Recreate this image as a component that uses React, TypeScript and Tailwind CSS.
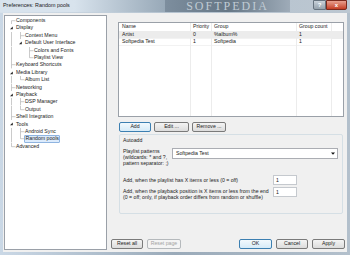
import React from 'react';

const font = { fontFamily: '"Liberation Sans", Arial, sans-serif' };

type Node = { label: string; level: number; exp?: boolean; selected?: boolean };

const tree: Node[] = [
  { label: 'Components', level: 0 },
  { label: 'Display', level: 0, exp: true },
  { label: 'Context Menu', level: 1 },
  { label: 'Default User Interface', level: 1, exp: true },
  { label: 'Colors and Fonts', level: 2 },
  { label: 'Playlist View', level: 2 },
  { label: 'Keyboard Shortcuts', level: 0 },
  { label: 'Media Library', level: 0, exp: true },
  { label: 'Album List', level: 1 },
  { label: 'Networking', level: 0 },
  { label: 'Playback', level: 0, exp: true },
  { label: 'DSP Manager', level: 1 },
  { label: 'Output', level: 1 },
  { label: 'Shell Integration', level: 0 },
  { label: 'Tools', level: 0, exp: true },
  { label: 'Android Sync', level: 1 },
  { label: 'Random pools', level: 1, selected: true },
  { label: 'Advanced', level: 0 },
];

// does the branch at depth d continue below row i?
function continues(i: number, d: number) {
  for (let j = i + 1; j < tree.length; j++) {
    if (tree[j].level < d) return false;
    if (tree[j].level === d) return true;
  }
  return false;
}

const LINE = '#a7a7a7';

function Cell({ kind, i }: { kind: 'pass' | 'empty' | 'node'; i?: number }) {
  const node = i !== undefined ? tree[i] : undefined;
  return (
    <svg width="9" height="7.4" viewBox="0 0 9 7.4" className="shrink-0">
      {kind === 'pass' && <line x1="4.5" y1="0" x2="4.5" y2="7.4" stroke={LINE} strokeWidth="0.6" />}
      {kind === 'node' && node && !node.exp && (
        <>
          {i! > 0 && <line x1="4.5" y1="0" x2="4.5" y2="3.7" stroke={LINE} strokeWidth="0.6" />}
          {continues(i!, node.level) && <line x1="4.5" y1="3.7" x2="4.5" y2="7.4" stroke={LINE} strokeWidth="0.6" />}
          <line x1="4.5" y1="3.7" x2="8.5" y2="3.7" stroke={LINE} strokeWidth="0.6" />
        </>
      )}
      {kind === 'node' && node && node.exp && <polygon points="5.8,2.4 5.8,5.2 3,5.2" fill="#262626" />}
    </svg>
  );
}

function Tree() {
  return (
    <div className="w-[103px] shrink-0 bg-white border border-[#9aa0a8] pt-[1px] pl-[2px] text-[5.2px] text-[#1b1b1b]">
      {tree.map((n, i) => (
        <div key={n.label} className="flex items-center h-[7.4px]">
          {Array.from({ length: n.level }).map((_, d) => (
            <Cell key={d} kind={continues(i, d) ? 'pass' : 'empty'} />
          ))}
          <Cell kind="node" i={i} />
          <span
            className={
              n.selected
                ? 'leading-none bg-[#dcebfc] border border-[#8fb4e0] rounded-[1px] px-[0.5px] py-[0.5px] -ml-[1px]'
                : 'leading-none'
            }
          >
            {n.label}
          </span>
        </div>
      ))}
    </div>
  );
}

function Btn({
  children,
  w,
  focus,
  disabled,
}: {
  children: React.ReactNode;
  w: string;
  focus?: boolean;
  disabled?: boolean;
}) {
  const base = 'flex items-center justify-center h-[10px] rounded-[2px] border text-[5.2px] leading-none';
  let look = 'border-[#7a7a7a] bg-linear-to-b from-[#f4f4f4] to-[#dcdcdc] text-[#1b1b1b]';
  if (focus) look = 'border-[#3c7fb1] bg-linear-to-b from-[#f2f9fd] to-[#d6ebf8] text-[#1b1b1b]';
  if (disabled) look = 'border-[#b5b9bc] bg-[#f4f4f4] text-[#a3a3a3]';
  return <div className={`${base} ${look} ${w}`}>{children}</div>;
}

const cols = [
  { title: 'Name', w: 'w-[72px]', pl: 'pl-[3px]', vals: ['Artist', 'Softpedia Test'] },
  { title: 'Priority', w: 'w-[21px]', pl: 'pl-[2px]', vals: ['0', '1'] },
  { title: 'Group', w: 'w-[85px]', pl: 'pl-[2px]', vals: ['%album%', 'Softpedia'] },
  { title: 'Group count', w: 'w-[35px]', pl: 'pl-[2px]', vals: ['1', '1'] },
];

function List() {
  return (
    <div className="ml-[7px] mt-[7px] w-[226px] h-[95px] bg-white border border-[#9aa0a8] flex text-[5.2px] text-[#1b1b1b]">
      {cols.map((c) => (
        <div key={c.title} className={`${c.w} shrink-0 border-r border-[#ececec] flex flex-col`}>
          <div className={`h-[9px] flex items-center ${c.pl} border-b border-[#ececec] leading-none`}>{c.title}</div>
          {c.vals.map((v, r) => (
            <div
              key={r}
              className={`h-[7px] flex items-center ${c.pl} leading-none border-b border-[#f2f2f2] ${r === 0 ? 'bg-[#ececec]' : ''}`}
            >
              {v}
            </div>
          ))}
        </div>
      ))}
      <div className="flex-1 flex flex-col">
        <div className="h-[9px] border-b border-[#ececec]" />
        <div className="h-[7px] bg-[#ececec]" />
      </div>
    </div>
  );
}

function Field({ w, value }: { w: string; value: string }) {
  return (
    <div className={`${w} h-[10px] bg-white border border-[#c5c9ce] flex items-center pl-[2px] text-[5.2px] leading-none`}>
      {value}
    </div>
  );
}

export default function App() {
  return (
    <div
      className="w-[350px] h-[255px] flex flex-col overflow-hidden bg-linear-to-r from-[#cad8e6] via-[#9aaab9] to-[#b3c0cc]"
      style={font}
    >
      {/* title bar */}
      <div className="h-[13px] shrink-0 flex items-start bg-linear-to-r from-[#d6e1eb] via-[#b4c2cf] to-[#bcc7d1]">
        <div className="flex items-center h-[12px] pl-[3px] w-[165px] text-[5.4px] text-[#1a1a1a] leading-none bg-linear-to-r from-[#d8e3ed] from-45% to-[#98a9b8]">
          Preferences: Random pools
        </div>
        <div className="w-[125px] flex items-center justify-center h-[12px] bg-linear-to-r from-[#7d8e9e] via-[#667786] to-[#9eabb8]">
          <span className="text-[12px] leading-none tracking-[2px] text-[#c0cbd4]" style={{ fontFamily: '"Liberation Serif", serif' }}>
            SOFTPEDIA
          </span>
        </div>
        <div className="flex-1 flex justify-end h-[10px] pr-[3px]">
          <div className="w-[13px] h-[10px] bg-linear-to-b from-[#c9d2da] to-[#95a2ad] border border-[#66737f] rounded-bl-[2px] flex items-center justify-center text-[6px] text-white leading-none font-bold">
            ?
          </div>
          <div className="w-[21px] h-[10px] bg-linear-to-b from-[#e8a08f] to-[#c43c22] border border-[#7b2a1d] rounded-br-[2px] flex items-center justify-center text-[6px] text-white leading-none font-bold">
            x
          </div>
        </div>
      </div>

      {/* client area */}
      <div className="flex-1 mx-[3px] mb-[3px] bg-[#f0f0f0] flex pt-[2px] pb-[2px] pl-[1px] pr-[2px]">
        <Tree />
        <div className="flex-1 flex flex-col pl-[4px] text-[#1b1b1b]">
          <List />

          <div className="flex mt-[5px] ml-[8px] gap-[3px]">
            <Btn w="w-[32px]" focus>Add</Btn>
            <Btn w="w-[35px]">Edit ...</Btn>
            <Btn w="w-[34px]">Remove ...</Btn>
          </div>

          <div className="mt-[2px] ml-[8px] w-[224px] h-[80px] border border-[#d5dfe5] rounded-[2px] pl-[3px] pt-[3px] text-[5.2px]">
            <div className="leading-none">Autoadd</div>
            <div className="flex mt-[5px]">
              <div className="w-[49px] leading-[6px]">
                Playlist patterns
                <br />
                (wildcards: * and ?,
                <br />
                pattern separator: ;)
              </div>
              <div className="w-[166px] h-[11px] bg-white border border-[#abadb3] flex items-center justify-between pl-[3px] pr-[2px] leading-none">
                <span>Softpedia Test</span>
                <svg width="4" height="3" viewBox="0 0 4 3">
                  <polygon points="0,0.5 4,0.5 2,2.8" fill="#111" />
                </svg>
              </div>
            </div>
            <div className="flex items-center mt-[9px]">
              <div className="w-[150px] leading-none">Add, when the playlist has X items or less (0 = off)</div>
              <Field w="w-[24px]" value="1" />
            </div>
            <div className="flex items-start mt-[2px]">
              <div className="w-[150px] leading-[6px] pt-[1px]">
                Add, when the playback position is X items or less from the end
                <br />
                (0 = off; only, if playback order differs from random or shuffle)
              </div>
              <Field w="w-[24px]" value="1" />
            </div>
          </div>

          <div className="flex-1" />
          <div className="flex items-center mb-[1px]">
            <Btn w="w-[32px]">Reset all</Btn>
            <div className="w-[4px]" />
            <Btn w="w-[34px]" disabled>Reset page</Btn>
            <div className="flex-1" />
            <Btn w="w-[33px]" focus>OK</Btn>
            <div className="w-[4px]" />
            <Btn w="w-[32px]">Cancel</Btn>
            <div className="w-[4px]" />
            <Btn w="w-[33px]">Apply</Btn>
          </div>
        </div>
      </div>
    </div>
  );
}
